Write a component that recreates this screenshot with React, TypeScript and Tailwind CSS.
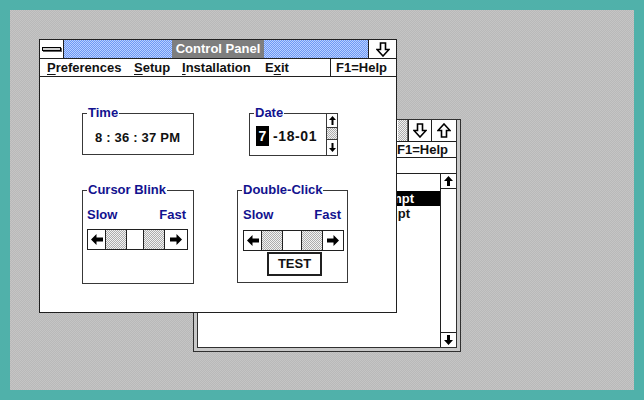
import React from "react";

const DITHER =
  "bg-[image:repeating-conic-gradient(#adadad_0_25%,#f2f2f2_0_50%)] bg-[length:2px_2px]";
const BLUE =
  "bg-[image:repeating-conic-gradient(#6d98f6_0_25%,#b8d0ff_0_50%)] bg-[length:2px_2px]";
const DESK =
  "bg-[image:repeating-conic-gradient(#b9b9b9_0_25%,#c5c5c5_0_50%)] bg-[length:2px_2px]";

const LeftArrow = () => (
  <svg width="12" height="11" viewBox="0 0 12 11">
    <path d="M0 5.5 L5.5 0 V3.5 H12 V7.5 H5.5 V11 Z" fill="#000" />
  </svg>
);
const RightArrow = () => (
  <svg width="12" height="11" viewBox="0 0 12 11">
    <path d="M12 5.5 L6.5 0 V3.5 H0 V7.5 H6.5 V11 Z" fill="#000" />
  </svg>
);
const SmallUp = () => (
  <svg width="7" height="9" viewBox="0 0 7 9">
    <path d="M3.5 0 L7 4 H4.5 V9 H2.5 V4 H0 Z" fill="#000" />
  </svg>
);
const SmallDown = () => (
  <svg width="7" height="9" viewBox="0 0 7 9">
    <path d="M3.5 9 L7 5 H4.5 V0 H2.5 V5 H0 Z" fill="#000" />
  </svg>
);
const ListUp = () => (
  <svg width="9" height="10" viewBox="0 0 9 10">
    <path d="M4.5 0 L9 5 H6 V10 H3 V5 H0 Z" fill="#000" />
  </svg>
);
const ListDown = () => (
  <svg width="9" height="10" viewBox="0 0 9 10">
    <path d="M4.5 10 L9 5 H6 V0 H3 V5 H0 Z" fill="#000" />
  </svg>
);
const HollowDown = () => (
  <svg width="14" height="15" viewBox="0 0 14 15">
    <path
      d="M4.5 1 H9.5 V7.5 H13 L7 14 L1 7.5 H4.5 Z"
      fill="#fff"
      stroke="#000"
      strokeWidth="1.6"
      strokeLinejoin="miter"
    />
  </svg>
);
const HollowUp = () => (
  <svg width="14" height="15" viewBox="0 0 14 15">
    <path
      d="M4.5 14 H9.5 V7.5 H13 L7 1 L1 7.5 H4.5 Z"
      fill="#fff"
      stroke="#000"
      strokeWidth="1.6"
      strokeLinejoin="miter"
    />
  </svg>
);

function Group({
  label,
  className,
  children,
}: {
  label: string;
  className: string;
  children?: React.ReactNode;
}) {
  return (
    <div className={`relative border border-[#383838] bg-white ${className}`}>
      <span className="absolute left-[4px] -top-[9px] bg-white px-[1px] text-[13px] leading-[15px] text-[#12128f]">
        {label}
      </span>
      {children}
    </div>
  );
}

function Scroll({ mid }: { mid: string }) {
  return (
    <div className="flex h-[21px] w-[101px] border border-[#202020] bg-white">
      <div className="flex w-[18px] items-center justify-center border-r border-[#202020]">
        <LeftArrow />
      </div>
      <div className={`w-[21px] border-r border-[#202020] ${DITHER}`} />
      <div className={`${mid} border-r border-[#202020] bg-white`} />
      <div className={`w-[21px] border-r border-[#202020] ${DITHER}`} />
      <div className="flex flex-1 items-center justify-center">
        <RightArrow />
      </div>
    </div>
  );
}

function Under({ c, rest }: { c: string; rest: string }) {
  return (
    <span>
      <span className="underline decoration-1 underline-offset-[2px]">{c}</span>
      {rest}
    </span>
  );
}

function BackWindow() {
  return (
    <div className="absolute left-[183px] top-[109px] h-[233px] w-[268px] border border-[#303030] bg-[#c8c8c8] px-[3px] pb-[3px]">
      <div className="flex h-full flex-col border-x border-b border-[#303030] bg-white">
        {/* title bar */}
        <div className="flex h-[22px] border-b border-[#202020]">
          <div className="flex flex-1 justify-end bg-white">
            <div className={`w-[10px] border-r border-[#606060] ${DITHER}`} />
          </div>
          <div className="flex w-[23px] items-center justify-center border-l border-[#202020]">
            <HollowDown />
          </div>
          <div className="flex w-[25px] items-center justify-center border-l border-[#202020]">
            <HollowUp />
          </div>
        </div>
        {/* menu bar */}
        <div className="flex h-[16px] border-b border-[#202020]">
          <div className="flex-1" />
          <div className="w-[64px] border-l border-[#202020] pl-[4px] text-[13px] leading-[15px]">
            F1=Help
          </div>
        </div>
        <div className="h-[16px] border-b border-[#202020]" />
        {/* list box */}
        <div className="flex flex-1">
          <div className="flex flex-1 flex-col pt-[2px] text-[13px]">
            <div className="h-[15px]" />
            <div className="flex h-[15px] items-center justify-end bg-black pr-[26px] leading-[15px] text-white">
              MS-DOS Prompt
            </div>
            <div className="flex h-[15px] items-center justify-end pr-[30px] leading-[15px]">
              Script
            </div>
          </div>
          <div className="flex w-[16px] flex-col border-l border-[#202020]">
            <div className="flex h-[15px] items-center justify-center border-b border-[#202020]">
              <ListUp />
            </div>
            <div className="flex-1" />
            <div className="flex h-[15px] items-center justify-center border-t border-[#202020]">
              <ListDown />
            </div>
          </div>
        </div>
      </div>
    </div>
  );
}

function MainWindow() {
  return (
    <div className="absolute left-[29px] top-[29px] z-10 flex h-[274px] w-[358px] flex-col border border-[#202020] bg-white">
      {/* title bar */}
      <div className="flex h-[19px] border-b border-[#202020]">
        <div className="flex w-[24px] items-center justify-center border-r border-[#202020] bg-white">
          <div className="h-[4px] w-[19px] border border-black bg-[#d0d0d0] shadow-[1px_1px_0_#606060]" />
        </div>
        <div className={`w-[108px] ${BLUE}`} />
        <div className="flex w-[92px] items-center justify-center bg-[#7e7e7e] text-[13px] leading-[18px] text-white">
          Control Panel
        </div>
        <div className={`flex-1 ${BLUE}`} />
        <div className="flex w-[28px] items-center justify-center border-l border-[#202020] bg-white">
          <HollowDown />
        </div>
      </div>
      {/* menu bar */}
      <div className="flex h-[18px] border-b border-[#202020] text-[13px] leading-[17px]">
        <div className="w-[94px] pl-[7px]">
          <Under c="P" rest="references" />
        </div>
        <div className="w-[48px]">
          <Under c="S" rest="etup" />
        </div>
        <div className="w-[83px]">
          <Under c="I" rest="nstallation" />
        </div>
        <div>
          <span>E</span>
          <span className="underline decoration-1 underline-offset-[2px]">x</span>
          <span>it</span>
        </div>
        <div className="flex-1" />
        <div className="w-[66px] border-l border-[#202020] pl-[5px]">F1=Help</div>
      </div>
      {/* client */}
      <div className="flex flex-1 flex-col">
        <div className="mt-[36px] flex items-start">
          <Group label="Time" className="ml-[42px] h-[42px] w-[112px]">
            <div className="pl-[12px] pt-[16px] text-[13px] leading-[15px] tracking-[0.2px]">
              8 : 36 : 37 PM
            </div>
          </Group>
          <Group label="Date" className="ml-[55px] flex h-[43px] w-[89px]">
            <div className="flex flex-1 items-start pl-[6px] pt-[12px]">
              <span className="flex h-[20px] w-[13px] items-center justify-center bg-black text-[14px] text-white">
                7
              </span>
              <span className="pl-[4px] text-[14px] leading-[20px] tracking-[0.6px]">-18-01</span>
            </div>
            <div className="flex w-[11px] flex-col border-l border-[#383838]">
              <div className="flex h-[14px] items-center justify-center border-b border-[#383838]">
                <SmallUp />
              </div>
              <div className={`flex-1 ${DITHER}`} />
              <div className="flex h-[16px] items-center justify-center border-t border-[#383838]">
                <SmallDown />
              </div>
            </div>
          </Group>
        </div>
        <div className="mt-[34px] flex items-start">
          <Group label="Cursor Blink" className="ml-[42px] h-[94px] w-[112px]">
            <div className="flex flex-col pl-[4px] pr-[7px] pt-[16px]">
              <div className="flex justify-between text-[13px] leading-[15px] text-[#12128f]">
                <span>Slow</span>
                <span>Fast</span>
              </div>
              <div className="mt-[7px]">
                <Scroll mid="w-[17px]" />
              </div>
            </div>
          </Group>
          <Group label="Double-Click" className="ml-[43px] h-[93px] w-[111px]">
            <div className="flex flex-col pl-[5px] pr-[6px] pt-[16px]">
              <div className="flex justify-between text-[13px] leading-[15px] text-[#12128f]">
                <span>Slow</span>
                <span>Fast</span>
              </div>
              <div className="mt-[8px]">
                <Scroll mid="w-[19px]" />
              </div>
              <div className="ml-[24px] mt-[1px] flex h-[24px] w-[55px] items-center justify-center border-2 border-[#202020] text-[13px]">
                TEST
              </div>
            </div>
          </Group>
        </div>
      </div>
    </div>
  );
}

export default function App() {
  return (
    <div className="h-[400px] w-[644px] bg-[#50b1aa] p-[10px] font-['Liberation_Sans',Arial,sans-serif] font-bold text-[#111]">
      <div className={`relative h-[380px] w-[624px] overflow-hidden ${DESK}`}>
        <BackWindow />
        <MainWindow />
      </div>
    </div>
  );
}
